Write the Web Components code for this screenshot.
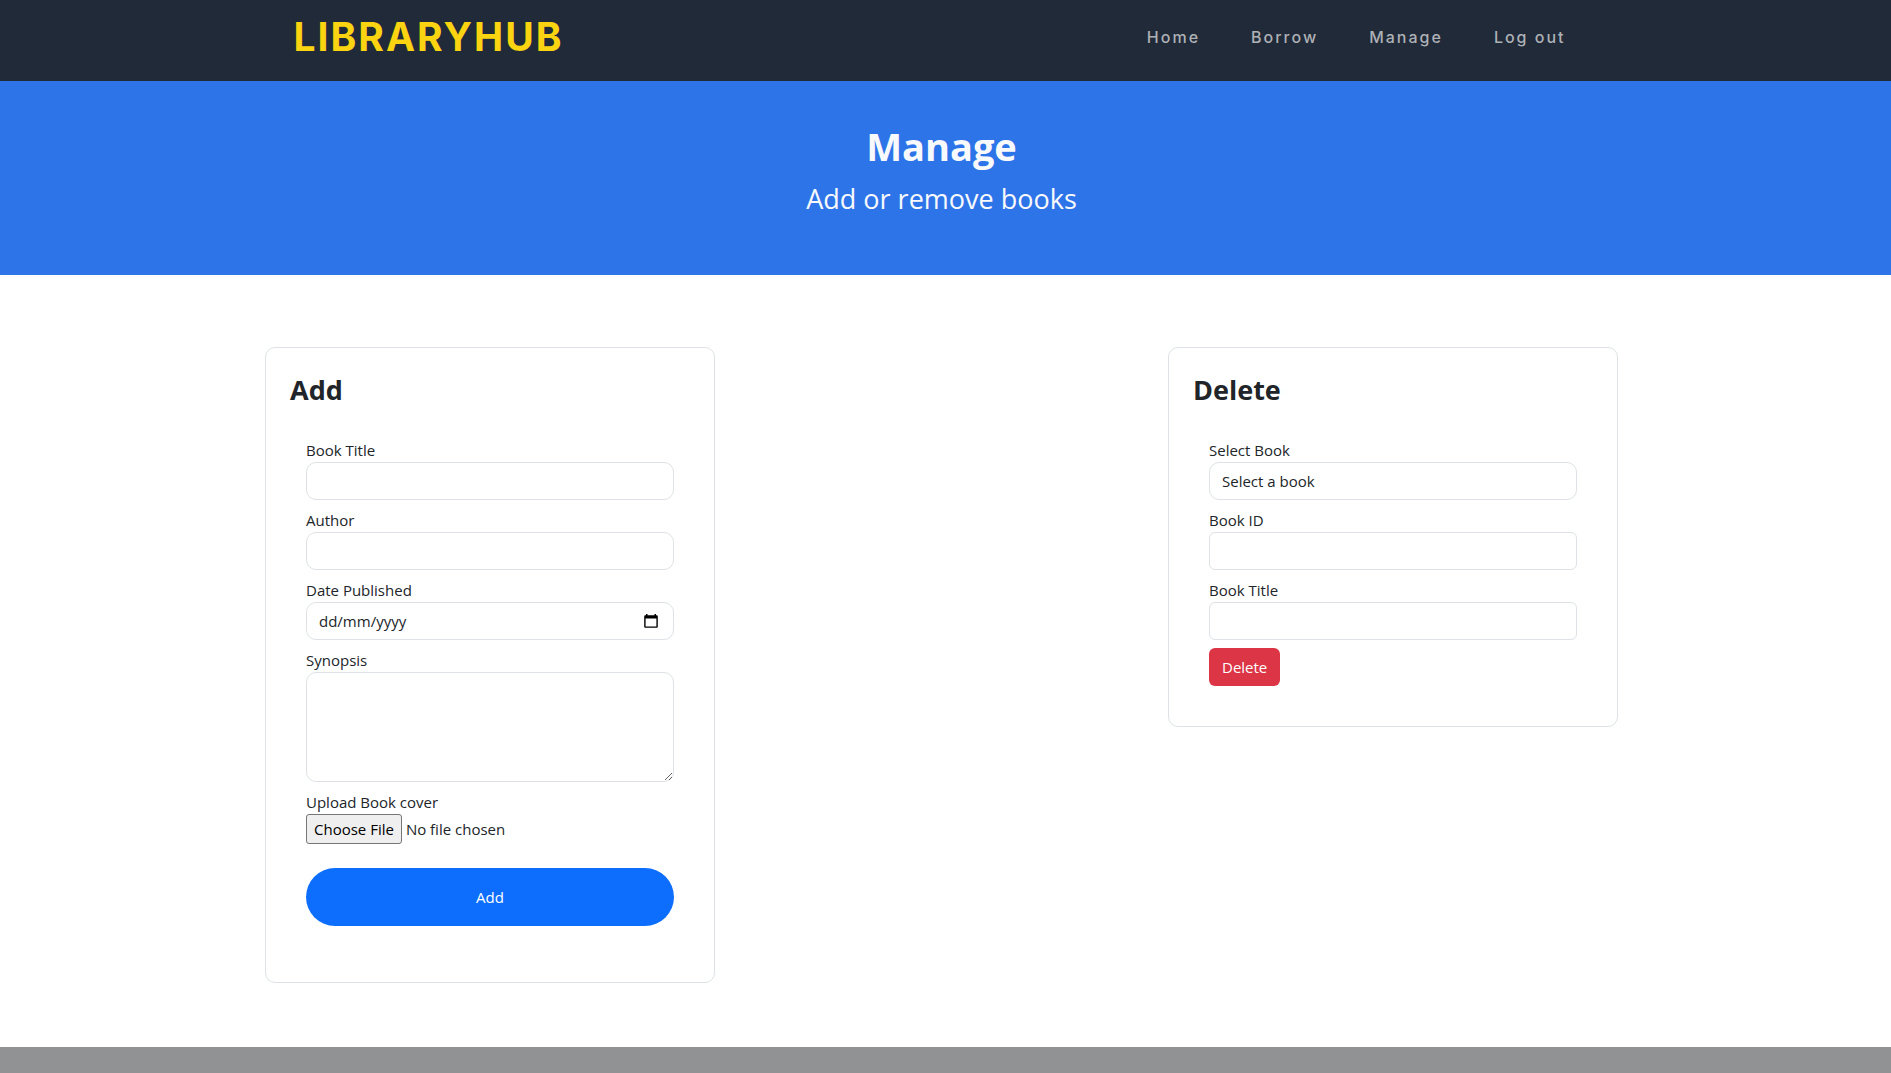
<!DOCTYPE html>
<html lang="en-GB">
<head>
<meta charset="utf-8">
<meta name="viewport" content="width=device-width, initial-scale=1">
<title>LibraryHub</title>
<style>
  body { margin: 0; background: #fff; color: #212529; font: 15px/24px "Open Sans", "Noto Sans", sans-serif; --line: #dee2e6; }
</style>
</head>
<body>
<library-page></library-page>
<script>
const define = (name, html, setup) => {
  const template = document.createElement('template');
  template.innerHTML = '<style>:host{display:block}*,*::before,*::after{box-sizing:border-box}</style>' + html;
  customElements.define(name, class extends HTMLElement {
    constructor() {
      super();
      this.attachShadow({ mode: 'open' }).append(template.content.cloneNode(true));
    }
    connectedCallback() { if (setup) setup(this, this.shadowRoot); }
  });
};

const controlStyle = `
  :host { --radius: 10px; }
  :host([square]) { --radius: 6px; }
  label { display: block; }
  .control { display: block; width: 100%; padding: 6px 12px; margin: 0; border: 1px solid var(--line);
    border-radius: var(--radius); background: #fff; color: inherit; font: inherit; appearance: none; }
  .control:focus { outline: 3px solid #9ec5fe; }
`;

define('site-header', `
  <style>
    :host { background: #212a38; font-family: Inter, sans-serif; }
    header { display: flex; align-items: center; justify-content: space-between; flex-wrap: wrap;
      max-width: 1320px; margin: 0 auto; padding: 9px 12px 16px; }
    .brand { color: #fad311; font-size: 39px; line-height: 56px; font-weight: 700; letter-spacing: 2px; text-decoration: none; }
    nav { display: flex; flex-wrap: wrap; gap: 3px; }
    nav ::slotted(a) { padding: 8px 24px; color: #adb1b6; font-size: 16px; line-height: 24px; font-weight: 500;
      letter-spacing: 2px; text-decoration: none; }
  </style>
  <header><a class="brand" href="#">LIBRARYHUB</a><nav aria-label="Main"><slot></slot></nav></header>
`);

define('page-hero', `
  <style>
    :host { background: #2d74e9; color: #f8f9fa; text-align: center; padding: 41px 24px 59px; }
    h1 { margin: 0 0 12px; font-size: 38px; line-height: 48px; font-weight: 700; }
    p { margin: 0; font-size: 27px; line-height: 34px; }
  </style>
  <h1><slot name="title"></slot></h1><p><slot></slot></p>
`);

define('panel-card', `
  <style>
    section { border: 1px solid var(--line); border-radius: 10px; padding: 24px; }
    h2 { margin: 0 0 14px; font-size: 27px; line-height: 36px; font-weight: 700; }
    form { display: flex; flex-direction: column; gap: 8px; padding: 16px; }
  </style>
  <section><h2><slot name="title"></slot></h2><form><slot></slot></form></section>
`);

define('text-field', `
  <style>${controlStyle}</style>
  <label for="field"></label><input class="control" id="field" type="text">
`, (host, root) => { root.querySelector('label').textContent = host.getAttribute('label'); });

define('area-field', `
  <style>${controlStyle}</style>
  <label for="field"></label><textarea class="control" id="field" rows="4"></textarea>
`, (host, root) => { root.querySelector('label').textContent = host.getAttribute('label'); });

define('date-field', `
  <style>${controlStyle}
    .box { display: flex; align-items: center; border: 1px solid var(--line); border-radius: var(--radius); padding-right: 12px; }
    .box .control { flex: 1; min-width: 0; border: 0; }
    .control::placeholder { color: #212529; opacity: 1; }
    button { display: flex; padding: 2px; border: 0; background: none; }
  </style>
  <label for="field"></label>
  <div class="box"><input class="control" id="field" type="text" placeholder="dd/mm/yyyy">
    <button type="button" aria-label="Open calendar"><svg width="16" height="16" viewBox="0 0 16 16">
      <path fill="#000" fill-rule="evenodd" d="M3 1h1.5v1.2h7V1H13v1.2h.5c.8 0 1.3.5 1.3 1.3v10c0 .8-.5 1.3-1.3 1.3h-11c-.8 0-1.3-.5-1.3-1.3v-10c0-.8.5-1.3 1.3-1.3H3zM2.6 5.6v7.8h10.8V5.6z"/></svg></button>
  </div>
`, (host, root) => { root.querySelector('label').textContent = host.getAttribute('label'); });

define('select-field', `
  <style>${controlStyle}</style>
  <label for="field"></label><select class="control" id="field"><option>Select a book</option></select>
`, (host, root) => { root.querySelector('label').textContent = host.getAttribute('label'); });

define('file-field', `
  <style>
    label { display: block; }
    input { display: block; width: 100%; height: 30px; font: inherit; color: inherit; }
    input::file-selector-button { height: 30px; padding: 1px 7px; border: 1px solid #767676; border-radius: 3px;
      background: #efefef; color: #000; font: inherit; }
  </style>
  <label for="field"></label><input id="field" type="file">
`, (host, root) => { root.querySelector('label').textContent = host.getAttribute('label'); });

define('action-button', `
  <style>
    button { display: block; border: 0; border-radius: 6px; padding: 7px 13px; background: #dc3545; color: #fff; font: inherit; cursor: pointer; }
    :host([primary]) { padding: 16px 0; }
    :host([primary]) button { width: 100%; border-radius: 29px; padding: 17px 24px; background: #0d6efd; }
  </style>
  <button type="button"><slot></slot></button>
`);

define('library-page', `
  <style>
    :host { display: flex; flex-direction: column; min-height: 100vh; }
    site-header, main { padding-right: 8px; }
    page-hero { padding-left: 0; padding-right: 8px; }
    main { padding-top: 72px; padding-bottom: 64px; }
    .cards { display: flex; flex-wrap: wrap; justify-content: space-between; align-items: flex-start; gap: 32px;
      max-width: 1353px; margin: 0 auto; }
    panel-card { width: 450px; max-width: 100%; }
    footer { flex: 1; background: #919293; }
  </style>
  <site-header><a href="#">Home</a><a href="#">Borrow</a><a href="#">Manage</a><a href="#">Log out</a></site-header>
  <page-hero><span slot="title">Manage</span>Add or remove books</page-hero>
  <main><div class="cards">
    <panel-card><span slot="title">Add</span>
      <text-field label="Book Title"></text-field>
      <text-field label="Author"></text-field>
      <date-field label="Date Published"></date-field>
      <area-field label="Synopsis"></area-field>
      <file-field label="Upload Book cover"></file-field>
      <action-button primary>Add</action-button>
    </panel-card>
    <panel-card><span slot="title">Delete</span>
      <select-field label="Select Book"></select-field>
      <text-field square label="Book ID"></text-field>
      <text-field square label="Book Title"></text-field>
      <action-button>Delete</action-button>
    </panel-card>
  </div></main>
  <footer></footer>
`);
</script>
</body>
</html>
